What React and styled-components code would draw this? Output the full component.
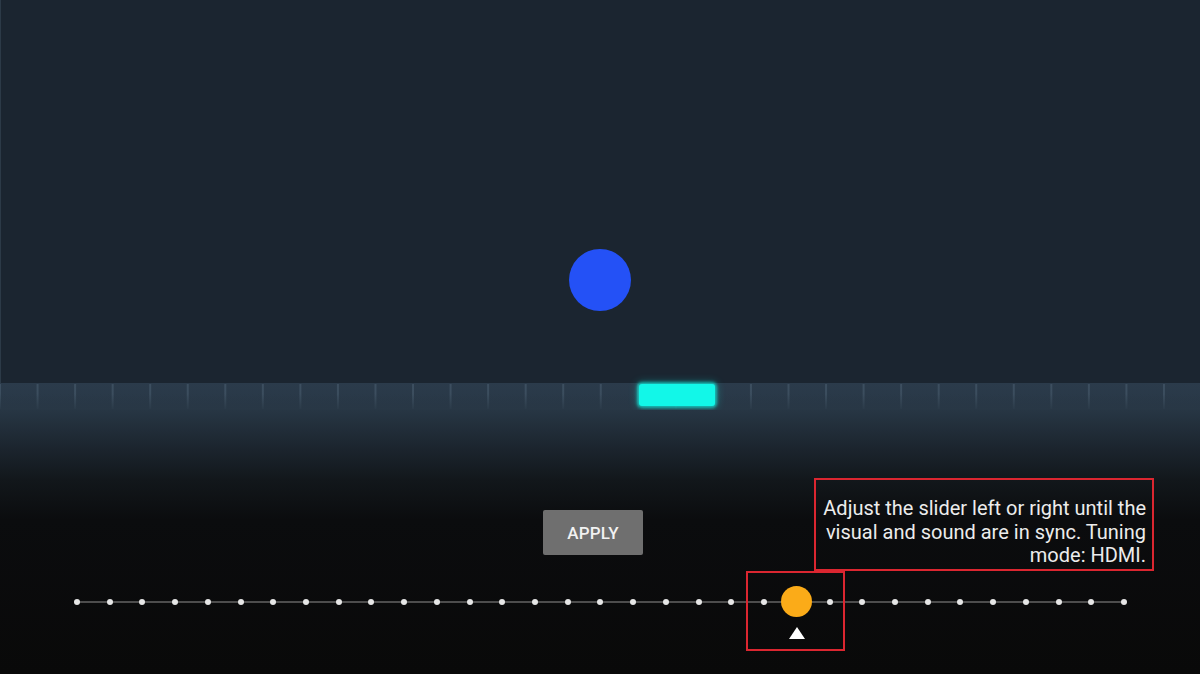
import React from "react";
import styled, { createGlobalStyle } from "styled-components";

const STOPS = 33;
const CURRENT = 22;

const GlobalStyle = createGlobalStyle`
  html, body {
    margin: 0;
    padding: 0;
    background: #090909;
  }
  body {
    font-family: Roboto, "Noto Sans", "Liberation Sans", sans-serif;
  }
`;

const App = () => {
  const stops = Array.from({ length: STOPS }, (_, i) => i);
  return (
    <>
      <GlobalStyle />
      <Screen>
        <Stage>
          <Flash />
        </Stage>
        <Ruler>
          <Beat />
        </Ruler>
        <Controls>
          <ActionRow>
            <ApplyBtn>APPLY</ApplyBtn>
            <Hint>
              Adjust the slider left or right until the visual and sound are in
              sync. Tuning mode: HDMI.
            </Hint>
          </ActionRow>
          <Track>
            {stops.map((i) => (
              <Stop key={i}>
                {i === CURRENT ? (
                  <Thumb>
                    <Knob />
                    <Pointer />
                  </Thumb>
                ) : (
                  <Dot />
                )}
              </Stop>
            ))}
          </Track>
        </Controls>
      </Screen>
    </>
  );
};

const Screen = styled.div`
  width: 1200px;
  height: 674px;
  overflow: hidden;
  display: flex;
  flex-direction: column;
  background: #1b2530;
  box-shadow: inset 1px 0 0 #2c3a47;
`;

const Stage = styled.div`
  height: 383px;
  box-sizing: border-box;
  padding-top: 249px;
  display: flex;
  justify-content: center;
  align-items: flex-start;
`;

const Flash = styled.div`
  width: 62px;
  height: 62px;
  border-radius: 50%;
  background: #2451f6;
`;

const Ruler = styled.div`
  height: 27px;
  display: flex;
  align-items: flex-start;
  padding-top: 1px;
  box-sizing: border-box;
  background-color: #2a3a4a;
  background-image:
    linear-gradient(180deg, rgba(41, 56, 70, 0) 0%, rgba(41, 56, 70, 0) 40%, rgba(40, 55, 69, 0.9) 100%),
    repeating-linear-gradient(
      90deg,
      transparent 0px,
      transparent 36px,
      rgba(110, 135, 155, 0.26) 36px,
      rgba(110, 135, 155, 0.26) 39px,
      transparent 39px,
      transparent 37.55px
    ),
    linear-gradient(180deg, #2b3b4b, #283746);
  background-size: 100% 100%, 37.55px 25px, 100% 100%;
  background-repeat: no-repeat, repeat-x, no-repeat;
  background-position: 0 0, 1px 1px, 0 0;
`;

const Beat = styled.div`
  margin-left: 639px;
  width: 76px;
  height: 22px;
  border-radius: 3px;
  background: #12f7e8;
  box-shadow: 0 0 3px 2px rgba(16, 246, 230, 0.6), 0 0 9px 2px rgba(16, 246, 230, 0.3);
`;

const Controls = styled.div`
  flex: 1;
  display: flex;
  flex-direction: column;
  padding-top: 68px;
  background: linear-gradient(
    180deg,
    #273644 0px,
    #1b242d 40px,
    #12171b 70px,
    #0b0c0e 110px,
    #090909 264px
  );
`;

const ActionRow = styled.div`
  display: flex;
  align-items: flex-start;
  padding-left: 543px;
  gap: 171px;
`;

const ApplyBtn = styled.button`
  margin-top: 32px;
  width: 100px;
  height: 45px;
  border: none;
  border-radius: 2px;
  background: #6f6f6f;
  color: #f2f2f2;
  font-family: Roboto, "Liberation Sans", sans-serif;
  font-size: 17px;
  font-weight: 500;
  letter-spacing: 0.2px;
  padding: 0;
`;

const Hint = styled.div`
  width: 340px;
  height: 93px;
  box-sizing: border-box;
  border: 2px solid #db2630;
  padding: 17px 6px 0 6px;
  color: #ececec;
  font-size: 20px;
  line-height: 23.5px;
  text-align: right;
`;

const Track = styled.div`
  position: relative;
  margin-left: 60.6px;
  width: 1079.8px;
  height: 80px;
  display: grid;
  grid-template-columns: repeat(${STOPS}, 1fr);

  &::before {
    content: "";
    position: absolute;
    left: 16.4px;
    right: 16.4px;
    top: 30px;
    height: 2px;
    background: #4d4d4d;
  }
`;

const Stop = styled.div`
  position: relative;
  display: flex;
  justify-content: center;
  padding-top: 28px;
`;

const Dot = styled.div`
  width: 6px;
  height: 6px;
  border-radius: 50%;
  background: #e6e6e6;
`;

const Thumb = styled.div`
  position: relative;
  margin-top: -13px;
  display: flex;
  flex-direction: column;
  align-items: center;
  gap: 10px;

  &::after {
    content: "";
    position: absolute;
    left: -35px;
    top: -15px;
    width: 99px;
    height: 80px;
    box-sizing: border-box;
    border: 2px solid #db2630;
  }
`;

const Knob = styled.div`
  width: 31px;
  height: 31px;
  border-radius: 50%;
  background: #fbab18;
`;

const Pointer = styled.div`
  width: 0;
  height: 0;
  border-left: 8px solid transparent;
  border-right: 8px solid transparent;
  border-bottom: 12px solid #ffffff;
`;

export default App;
